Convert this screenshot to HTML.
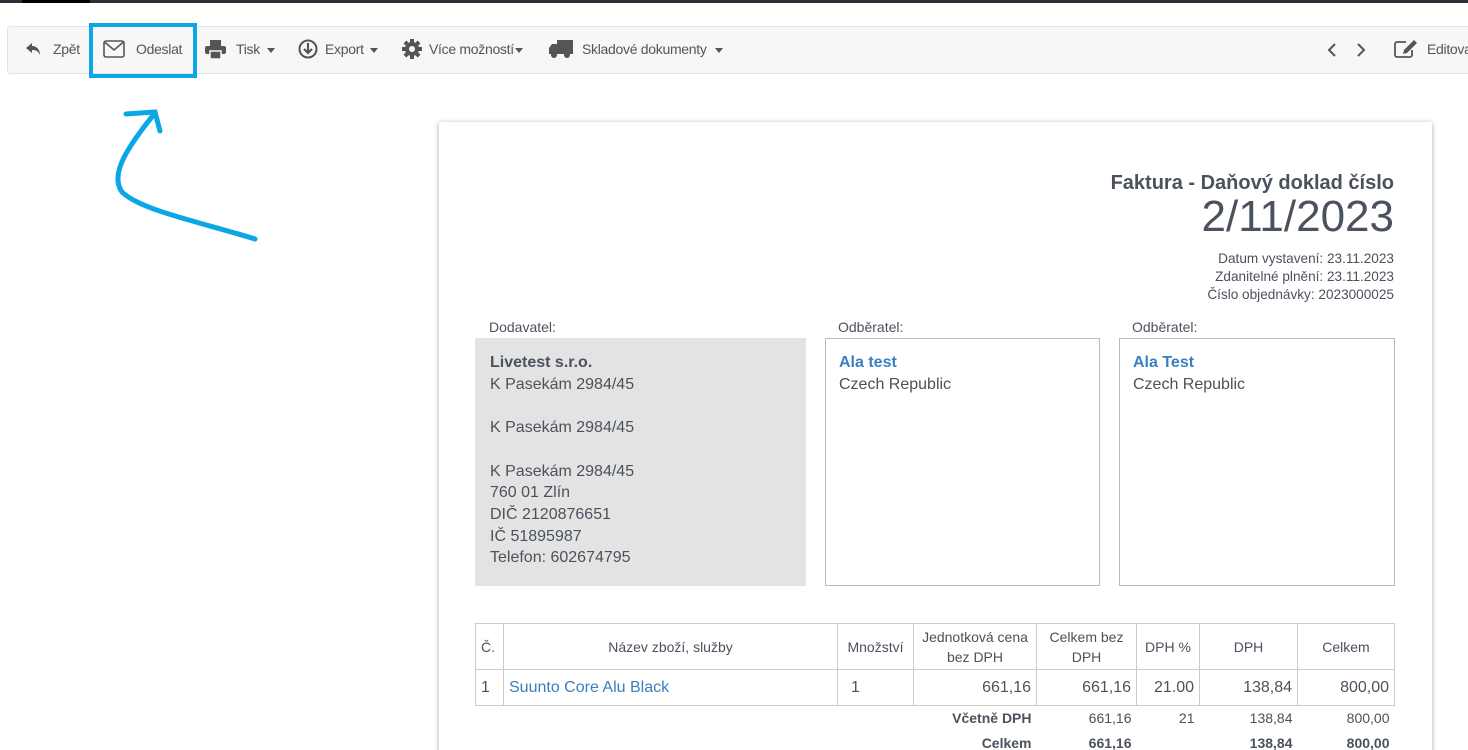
<!DOCTYPE html>
<html style="overflow:hidden;height:750px"><head><meta charset="utf-8"><style>
*{margin:0;padding:0;box-sizing:border-box}
body{width:1468px;height:750px;overflow:hidden;background:#fff;font-family:"Liberation Sans",sans-serif;color:#4a525d;position:relative}
.a{position:absolute}
.tb{left:7px;top:26px;width:1475px;height:48px;background:#f7f7f7;border:1px solid #e3e3e3;border-radius:4px}
.ti{position:absolute;top:41px;font-size:14px;color:#555;letter-spacing:-0.3px}
.car{display:inline-block;width:0;height:0;border-left:4px solid transparent;border-right:4px solid transparent;border-top:5px solid #555;vertical-align:middle;margin-left:3px}
.paper{left:439px;top:122px;width:993px;height:640px;background:#fff;box-shadow:0 1px 5px rgba(0,0,0,.35)}
.r{text-align:right}
table{border-collapse:collapse;position:absolute;left:475px;top:623px;font-size:14px;color:#4a525d}
td{border:1px solid #ccc;padding:0 5px}
.lnk{color:#3a7fc1}
</style></head><body>
<div class="a" style="left:0;top:0;width:1468px;height:3px;background:#2c3039"></div>
<div class="a" style="left:22px;top:0;width:68px;height:3px;background:#000"></div>
<div class="a tb"></div>
<svg class="a" style="left:25px;top:41px" width="18" height="16" viewBox="0 0 18 16"><path d="M7 2 L1 7 L7 12 V9 C11 9 13 10 15 14 C15 9 12 5 7 5 Z" fill="#555"/></svg>
<div class="ti" style="left:53px">Zpět</div>
<svg class="a" style="left:103px;top:40px" width="22" height="18" viewBox="0 0 22 18"><rect x="1" y="1" width="20" height="16" rx="2" fill="none" stroke="#555" stroke-width="1.6"/><path d="M1.5 2 L11 10 L20.5 2" fill="none" stroke="#555" stroke-width="1.6"/></svg>
<div class="ti" style="left:136px">Odeslat</div>
<div class="a" style="left:89px;top:23px;width:108px;height:55px;border:4px solid #0aa6e6"></div>
<svg class="a" style="left:205px;top:40px" width="21" height="19" viewBox="0 0 21 19"><rect x="5" y="0" width="11" height="6" fill="#555"/><rect x="0" y="6" width="21" height="8" rx="2" fill="#555"/><rect x="5" y="11" width="11" height="8" fill="#555" stroke="#f7f7f7" stroke-width="1.5"/></svg>
<div class="ti" style="left:236px">Tisk <span class="car"></span></div>
<svg class="a" style="left:298px;top:39px" width="20" height="20" viewBox="0 0 20 20"><circle cx="10" cy="10" r="8.5" fill="none" stroke="#555" stroke-width="2"/><path d="M10 4 V13 M6 10 L10 14 L14 10" fill="none" stroke="#555" stroke-width="2.2"/></svg>
<div class="ti" style="left:325px">Export <span class="car"></span></div>
<svg class="a" style="left:402px;top:39px" width="20" height="20" viewBox="0 0 20 20"><g fill="#555"><circle cx="10" cy="10" r="7"/><rect x="8" y="0" width="4" height="20"/><rect x="0" y="8" width="20" height="4"/><rect x="8" y="0" width="4" height="20" transform="rotate(45 10 10)"/><rect x="8" y="0" width="4" height="20" transform="rotate(-45 10 10)"/></g><circle cx="10" cy="10" r="3" fill="#f7f7f7"/></svg>
<div class="ti" style="left:429px">Více možností<span class="car" style="margin-left:1px"></span></div>
<svg class="a" style="left:549px;top:40px" width="24" height="19" viewBox="0 0 24 19"><rect x="8" y="0" width="16" height="14" fill="#555"/><path d="M0 8 L3 4 H8 V14 H0 Z" fill="#555"/><circle cx="5" cy="15" r="3" fill="#555"/><circle cx="18" cy="15" r="3" fill="#555"/></svg>
<div class="ti" style="left:582px">Skladové dokumenty <span class="car" style="margin-left:5px"></span></div>
<svg class="a" style="left:1326px;top:42px" width="12" height="16" viewBox="0 0 12 16"><path d="M9 2 L3 8 L9 14" fill="none" stroke="#555" stroke-width="2"/></svg>
<svg class="a" style="left:1355px;top:42px" width="12" height="16" viewBox="0 0 12 16"><path d="M3 2 L9 8 L3 14" fill="none" stroke="#555" stroke-width="2"/></svg>
<svg class="a" style="left:1394px;top:39px" width="24" height="19" viewBox="0 0 24 19"><path d="M12 3 H3 a2 2 0 0 0 -2 2 V16 a2 2 0 0 0 2 2 H16 a2 2 0 0 0 2 -2 V11" fill="none" stroke="#555" stroke-width="1.8"/><path d="M20 1 L23 4 L13 14 L9 15 L10 11 Z" fill="#555"/></svg>
<div class="ti" style="left:1427px">Editovat</div>

<svg class="a" style="left:0;top:0" width="300" height="260"><g fill="none" stroke="#0aa6e6" stroke-width="5" stroke-linecap="round"><path d="M255 239 C200 222 140 210 122 192 C110 175 125 150 155 113"/><path d="M126 114 L155 112 L160 131"/></g></svg>

<div class="a paper"></div>
<div class="a r" style="right:74px;top:172px;font-size:20px;font-weight:bold;">Faktura - Daňový doklad číslo</div>
<div class="a r" style="right:74px;top:192px;font-size:44px;">2/11/2023</div>
<div class="a r" style="right:74px;top:250px;font-size:13.6px;line-height:18px">Datum vystavení: 23.11.2023<br>Zdanitelné plnění: 23.11.2023<br>Číslo objednávky: 2023000025</div>

<div class="a" style="left:489px;top:319px;font-size:14px">Dodavatel:</div>
<div class="a" style="left:838px;top:319px;font-size:14px">Odběratel:</div>
<div class="a" style="left:1132px;top:319px;font-size:14px">Odběratel:</div>
<div class="a" style="left:475px;top:338px;width:331px;height:248px;background:#e3e3e3;padding:14px 15px;font-size:16px;line-height:21.7px"><b>Livetest s.r.o.</b><br>K Pasekám 2984/45<br><br>K Pasekám 2984/45<br><br>K Pasekám 2984/45<br>760 01 Zlín<br>DIČ 2120876651<br>IČ 51895987<br>Telefon: 602674795</div>
<div class="a" style="left:825px;top:338px;width:275px;height:248px;border:1px solid #bbb;padding:13px 13px;font-size:16px;line-height:22px"><b class="lnk">Ala test</b><br>Czech Republic</div>
<div class="a" style="left:1119px;top:338px;width:276px;height:248px;border:1px solid #bbb;padding:13px 13px;font-size:16px;line-height:22px"><b class="lnk">Ala Test</b><br>Czech Republic</div>

<table>
<tr style="height:46px;text-align:center"><td style="width:28px;text-align:left">Č.</td><td style="width:334px">Název zboží, služby</td><td style="width:76px;padding:0 2px">Množství</td><td style="width:123px;padding:0 2px;line-height:20px">Jednotková cena bez DPH</td><td style="width:100px;line-height:20px">Celkem bez DPH</td><td style="width:63px">DPH %</td><td style="width:98px">DPH</td><td style="width:97px">Celkem</td></tr>
<tr style="height:36px;font-size:16px"><td>1</td><td class="lnk">Suunto Core Alu Black</td><td style="padding-left:13px">1</td><td class="r">661,16</td><td class="r">661,16</td><td class="r">21.00</td><td class="r">138,84</td><td class="r">800,00</td></tr>
<tr style="height:25px"><td colspan="3" style="border:none;border-top:1px solid #ccc"></td><td class="r" style="border:none;border-top:1px solid #ccc"><b>Včetně DPH</b></td><td class="r" style="border:none;border-top:1px solid #ccc">661,16</td><td class="r" style="border:none;border-top:1px solid #ccc">21</td><td class="r" style="border:none;border-top:1px solid #ccc">138,84</td><td class="r" style="border:none;border-top:1px solid #ccc">800,00</td></tr>
<tr style="height:24px;font-weight:bold"><td colspan="3" style="border:none"></td><td class="r" style="border:none">Celkem</td><td class="r" style="border:none">661,16</td><td style="border:none"></td><td class="r" style="border:none">138,84</td><td class="r" style="border:none">800,00</td></tr>
</table>
</body></html>
